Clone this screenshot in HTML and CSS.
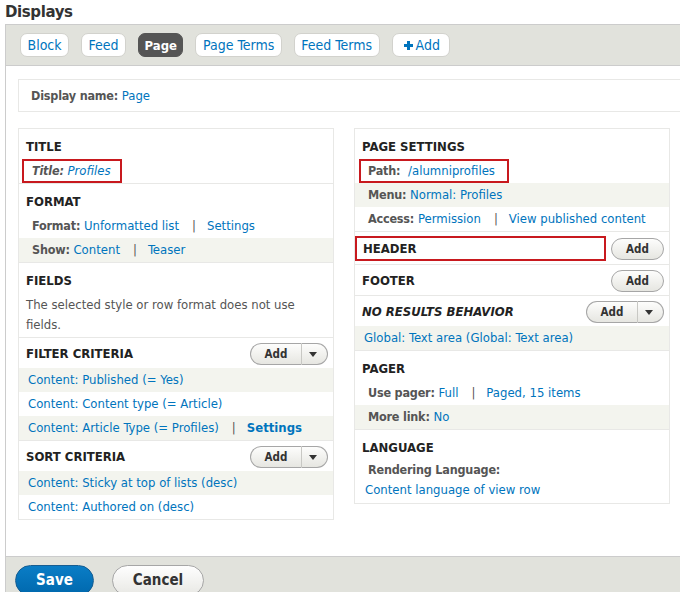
FILE: index.html
```html
<!DOCTYPE html>
<html lang="en">
<head>
  <meta charset="UTF-8" />
  <title>Displays - Views</title>
  <link rel="stylesheet" href="styles.css">
</head>
<body>

  <h2 class="page-title">Displays</h2>

  <div class="views-display">
    <div class="display-tabs">
      <a href="#" class="tab">Block</a>
      <a href="#" class="tab">Feed</a>
      <a href="#" class="tab active">Page</a>
      <a href="#" class="tab">Page Terms</a>
      <a href="#" class="tab">Feed Terms</a>
      <a href="#" class="tab add-tab"><svg class="plus" width="9" height="9" viewBox="0 0 9 9"><path d="M3 0h3v3h3v3H6v3H3V6H0V3h3z" /></svg>Add</a>
    </div>

    <div class="display-body">
      <div class="display-name">
        <span class="label">Display name:</span> <a href="#">Page</a>
      </div>

      <div class="columns">
        <!-- left column -->
        <div class="column">
          <div class="section">
            <div class="section-head"><h3>Title</h3></div>
            <div class="row marked-row">
              <span class="marked"><em><span class="label">Title:</span> <a href="#">Profiles</a></em></span>
            </div>
          </div>

          <div class="section">
            <div class="section-head"><h3>Format</h3></div>
            <div class="row setting"><span class="label">Format:</span> <a href="#">Unformatted list</a><span class="sep">|</span><a href="#">Settings</a></div>
            <div class="row setting striped"><span class="label">Show:</span> <a href="#">Content</a><span class="sep">|</span><a href="#">Teaser</a></div>
          </div>

          <div class="section">
            <div class="section-head"><h3>Fields</h3></div>
            <p class="note">The selected style or row format does not use fields.</p>
          </div>

          <div class="section">
            <div class="section-head has-button">
              <h3>Filter criteria</h3>
              <span class="btn-group"><button class="btn">Add</button><button class="btn caret"><svg width="8" height="5" viewBox="0 0 8 5"><path d="M0 0h8L4 5z" /></svg></button></span>
            </div>
            <div class="row striped"><a href="#">Content: Published (= Yes)</a></div>
            <div class="row"><a href="#">Content: Content type (= Article)</a></div>
            <div class="row striped"><a href="#">Content: Article Type (= Profiles)</a><span class="sep">|</span><a href="#" class="strong">Settings</a></div>
          </div>

          <div class="section">
            <div class="section-head has-button">
              <h3>Sort criteria</h3>
              <span class="btn-group"><button class="btn">Add</button><button class="btn caret"><svg width="8" height="5" viewBox="0 0 8 5"><path d="M0 0h8L4 5z" /></svg></button></span>
            </div>
            <div class="row striped"><a href="#">Content: Sticky at top of lists (desc)</a></div>
            <div class="row"><a href="#">Content: Authored on (desc)</a></div>
          </div>
        </div>

        <!-- right column -->
        <div class="column">
          <div class="section">
            <div class="section-head"><h3>Page settings</h3></div>
            <div class="row marked-row path-row">
              <span class="marked"><span class="label">Path:</span> <a href="#">/alumniprofiles</a></span>
            </div>
            <div class="row setting striped"><span class="label">Menu:</span> <a href="#">Normal: Profiles</a></div>
            <div class="row setting"><span class="label">Access:</span> <a href="#">Permission</a><span class="sep">|</span><a href="#">View published content</a></div>
          </div>

          <div class="section">
            <div class="section-head has-button marked-head">
              <h3 class="marked">Header</h3>
              <button class="btn single">Add</button>
            </div>
          </div>

          <div class="section">
            <div class="section-head has-button">
              <h3>Footer</h3>
              <button class="btn single">Add</button>
            </div>
          </div>

          <div class="section">
            <div class="section-head has-button">
              <h3><em>No results behavior</em></h3>
              <span class="btn-group"><button class="btn">Add</button><button class="btn caret"><svg width="8" height="5" viewBox="0 0 8 5"><path d="M0 0h8L4 5z" /></svg></button></span>
            </div>
            <div class="row striped"><a href="#">Global: Text area (Global: Text area)</a></div>
          </div>

          <div class="section">
            <div class="section-head"><h3>Pager</h3></div>
            <div class="row setting"><span class="label">Use pager:</span> <a href="#">Full</a><span class="sep">|</span><a href="#">Paged, 15 items</a></div>
            <div class="row setting striped"><span class="label">More link:</span> <a href="#">No</a></div>
          </div>

          <div class="section">
            <div class="section-head"><h3>Language</h3></div>
            <div class="lang">
              <span class="label">Rendering Language:</span>
              <a href="#">Content language of view row</a>
            </div>
          </div>
        </div>
      </div>
    </div>

    <div class="form-actions">
      <button class="button primary">Save</button>
      <button class="button">Cancel</button>
    </div>
  </div>

</body>
</html>
```

FILE: styles.css
```css
:root {
  --link: #0074bd;
  --label: #555;
  --stripe: #f3f4ee;
  --bar: #e1e2dc;
  --line: #e8e8e6;
  --marked: #c8191e;
}

body {
  margin: 0;
  padding: 0 0 0 5px;
  background: #fff;
  color: #333;
  font-family: "DejaVu Sans Condensed", "DejaVu Sans", sans-serif;
  font-stretch: condensed;
  font-size: 13px;
  overflow: hidden;
}

a {
  color: var(--link);
  text-decoration: none;
}

.page-title {
  margin: 0;
  padding: 2px 0 1px;
  font-family: "DejaVu Sans", sans-serif;
  font-stretch: normal;
  font-size: 15px;
  line-height: 21px;
  letter-spacing: -0.4px;
  color: #333;
}

.views-display {
  width: 730px;
  border-left: 1px solid #ccc;
}

.display-tabs {
  display: flex;
  gap: 12px;
  padding: 8px 14px;
  background: var(--bar);
  border-top: 1px solid #ccc;
  border-bottom: 1px solid #ccc;
}

.tab {
  display: inline-flex;
  align-items: center;
  height: 24px;
  box-sizing: border-box;
  padding: 0 6.5px;
  background: #fff;
  border: 1px solid #d2d2cd;
  border-radius: 7px;
  font-size: 14px;
}

.tab.active {
  background: #555;
  border-color: #555;
  color: #fff;
  font-weight: bold;
  font-size: 13px;
  padding: 0 5.5px;
}

.add-tab {
  padding: 0 9px 0 11px;
}

.add-tab .plus {
  fill: var(--link);
  margin-right: 3px;
}

.display-body {
  padding: 13px 0 36px 12px;
}

.display-name {
  height: 33px;
  box-sizing: border-box;
  padding: 0 12px;
  line-height: 31px;
  border: 1px solid var(--line);
}

.label {
  color: var(--label);
  font-weight: bold;
  font-size: 12.5px;
  letter-spacing: -0.2px;
}

.columns {
  display: flex;
  align-items: flex-start;
  gap: 20px;
  margin-top: 16px;
}

.column {
  width: 316px;
  box-sizing: border-box;
  border: 1px solid var(--line);
}

.section + .section {
  border-top: 1px solid var(--line);
}

.section-head {
  display: flex;
  align-items: center;
  justify-content: space-between;
  padding: 10px 5px 4px 7px;
}

.section-head.has-button {
  padding: 5px 5px 3px 7px;
}

.section-head.marked-head {
  padding: 4px 5px 3px 0;
}

h3 {
  margin: 0;
  font-size: 13px;
  line-height: 16px;
  color: #222;
  text-transform: uppercase;
}

h3.marked {
  flex: 1;
  height: 25px;
  box-sizing: border-box;
  margin-right: 5px;
  padding: 0 6px;
  line-height: 21px;
  border: 2px solid var(--marked);
}

.row {
  height: 24px;
  padding: 0 9px;
  line-height: 24px;
  white-space: nowrap;
}

.row.setting {
  padding-left: 13px;
}

.row.striped {
  background: var(--stripe);
}

.row.marked-row {
  padding-left: 3px;
}

.row.path-row {
  padding-left: 4px;
}

.marked {
  display: inline-block;
  height: 24px;
  box-sizing: border-box;
  padding: 0 9px 0 8px;
  line-height: 20px;
  border: 2px solid var(--marked);
}

.path-row .marked {
  padding: 0 12px 0 7px;
}

.path-row .label {
  margin-right: 4px;
}

.sep {
  margin: 0 11px 0 13px;
  color: var(--label);
}

.strong {
  font-weight: bold;
}

.note {
  margin: 0;
  padding: 2px 20px 2px 7px;
  line-height: 20px;
  color: #555;
}

.lang {
  padding: 0 0 3px 7px;
}

.lang .label {
  display: block;
  padding-left: 6px;
  line-height: 20px;
}

.lang a {
  display: block;
  padding-left: 3px;
  line-height: 20px;
}

/* small pill buttons */
.btn {
  height: 22px;
  box-sizing: border-box;
  margin: 0;
  padding: 0;
  background: linear-gradient(#fdfdfc, #e6e6e1);
  border: 1px solid #a6a6a6;
  border-radius: 12px;
  color: #333;
  font-family: inherit;
  font-stretch: condensed;
  font-size: 11.5px;
  font-weight: bold;
  cursor: pointer;
}

.btn.single {
  width: 53px;
}

.btn-group {
  display: inline-flex;
}

.btn-group .btn {
  width: 52px;
  border-radius: 12px 0 0 12px;
  border-right: 1px solid #c8c8c4;
}

.btn-group .caret {
  width: 26px;
  border-left: 0;
  border-right: 1px solid #a6a6a6;
  border-radius: 0 12px 12px 0;
  display: flex;
  align-items: center;
  justify-content: center;
  padding-right: 3px;
}

.caret svg {
  fill: #333;
}

.form-actions {
  display: flex;
  gap: 18px;
  padding: 8px 0 0 9px;
  height: 40px;
  background: var(--bar);
  border-top: 1px solid #ccc;
}

.button {
  height: 31px;
  width: 92px;
  box-sizing: border-box;
  padding: 0 0 2px;
  background: linear-gradient(#fefefe, #e8e8e4);
  border: 1px solid #a6a6a6;
  border-radius: 18px;
  color: #333;
  font-family: "Liberation Sans Narrow", "DejaVu Sans Condensed", sans-serif;
  font-size: 15px;
  font-weight: bold;
  cursor: pointer;
}

.button.primary {
  width: 79px;
  background: linear-gradient(#0a7dc6, #0068ad);
  border-color: #175d91;
  color: #fff;
}
```
